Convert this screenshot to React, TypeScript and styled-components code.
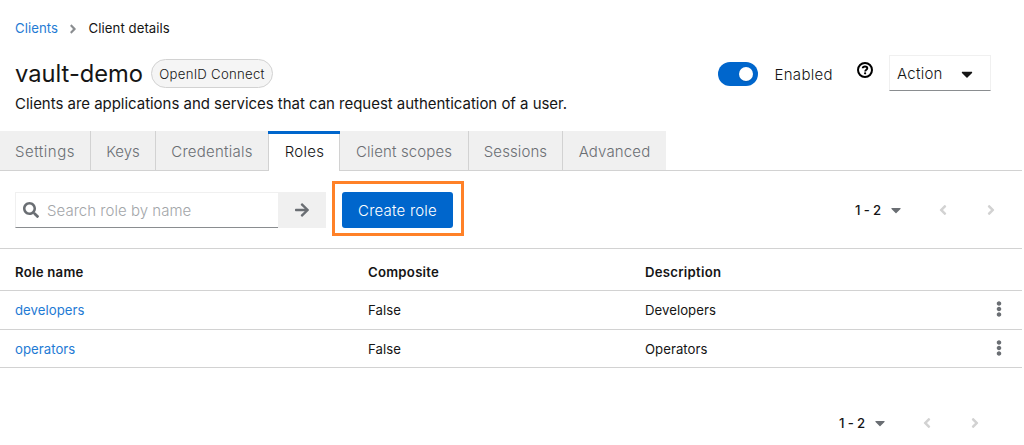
import React from "react";
import styled, { createGlobalStyle, css } from "styled-components";
import {
  FaAngleLeft,
  FaAngleRight,
  FaArrowRight,
  FaCaretDown,
  FaEllipsisV,
  FaSearch,
} from "react-icons/fa";

const GlobalStyle = createGlobalStyle`
  *, *::before, *::after { box-sizing: border-box; }
  body {
    margin: 0;
    background: #fff;
    color: #151515;
    font-family: Inter, "Liberation Sans", sans-serif;
    font-size: 15px;
    font-weight: 300;
    line-height: 24px;
  }
  svg { display: block; flex: none; }
  button, input { font: inherit; color: inherit; letter-spacing: inherit; }
`;

const Page = styled.main`
  width: 1022px;
  height: 445px;
  overflow: hidden;
`;

const Breadcrumb = styled.nav`
  display: flex;
  align-items: center;
  height: 21px;
  margin: 18px 0 0 15px;
  font-size: 13.2px;
  font-weight: 400;
  line-height: 21px;
  letter-spacing: 0.06px;

  svg {
    margin: 0 9px 0 7.5px;
    color: #8a8d90;
  }
`;

const Link = styled.a`
  color: #1f7bd4;
  text-decoration: none;
`;

const Header = styled.header`
  display: flex;
  align-items: flex-start;
  justify-content: space-between;
  height: 92px;
  padding: 16px 31px 0 15px;
`;

const TitleRow = styled.div`
  display: flex;
  align-items: center;
  gap: 8px;
  height: 37px;
`;

const Title = styled.h1`
  width: 128px;
  margin: 0;
  font-size: 23.7px;
  font-weight: 400;
  line-height: 32px;
  white-space: nowrap;
`;

const Badge = styled.span`
  display: flex;
  align-items: center;
  justify-content: center;
  width: 122px;
  height: 29px;
  border: 1px solid #d2d2d2;
  border-radius: 15px;
  background: #f5f5f5;
  font-size: 13.2px;
  letter-spacing: 0.25px;
  white-space: nowrap;
`;

const Subtitle = styled.p`
  margin: 0;
  font-weight: 400;
  letter-spacing: -0.03px;
  white-space: nowrap;
`;

const Controls = styled.div`
  display: flex;
  align-items: flex-start;
`;

const Toggle = styled.button`
  display: flex;
  align-items: center;
  justify-content: flex-end;
  width: 40px;
  height: 24px;
  margin: 7px 16.5px 0 0;
  padding: 0 5px;
  border: 0;
  border-radius: 12px;
  background: #06c;

  &::before {
    content: "";
    width: 14px;
    height: 14px;
    border-radius: 50%;
    background: #fff;
    box-shadow: 0 1px 2px rgba(3, 3, 3, 0.12);
  }
`;

const ToggleLabel = styled.span`
  width: 82.5px;
  margin-top: 8px;
  letter-spacing: 0.3px;
`;

const HelpSlot = styled.span`
  width: 32px;
  margin-top: 7px;
`;

const ActionButton = styled.button`
  display: flex;
  align-items: center;
  justify-content: space-between;
  width: 102px;
  height: 36px;
  padding: 1px 14px 0 7px;
  border: 1px solid #f0f0f0;
  border-bottom-color: #8a8d90;
  background: #fff;
  letter-spacing: 0.25px;
`;

const Tabs = styled.div`
  display: flex;
  height: 40px;

  &::after {
    content: "";
    flex: 1;
    border-bottom: 1px solid #d2d2d2;
  }
`;

const activeTab = css`
  padding: 2px 0 0 1px;
  border: 0;
  background:
    linear-gradient(#06c, #06c) top / 100% 3px no-repeat,
    linear-gradient(#d2d2d2, #d2d2d2) left / 1px 100% no-repeat,
    linear-gradient(#d2d2d2, #d2d2d2) right / 1px 100% no-repeat,
    #fff;
  color: #151515;
`;

const Tab = styled.button<{
  $width: number;
  $active?: boolean;
  $divider?: boolean;
  $tracking?: number;
}>`
  width: ${(p) => p.$width}px;
  padding: 2px 0 0;
  border: 0 solid #d2d2d2;
  border-right-width: ${(p) => (p.$divider ? 1 : 0)}px;
  border-bottom-width: 1px;
  background: #f0f0f0;
  color: #6a6e73;
  letter-spacing: ${(p) => p.$tracking ?? 0}px;
  white-space: nowrap;
  ${(p) => p.$active && activeTab}
`;

const Toolbar = styled.div`
  display: flex;
  align-items: center;
  height: 77px;
  padding: 0 23px 0 15px;
`;

const SearchField = styled.label`
  display: flex;
  align-items: center;
  gap: 8px;
  width: 263px;
  height: 36px;
  padding-left: 7px;
  border: 1px solid #f0f0f0;
  border-right: 0;
  border-bottom-color: #8a8d90;
  color: #6a6e73;
`;

const SearchInput = styled.input`
  width: 220px;
  padding: 2px 0 0;
  border: 0;
  outline: 0;
  background: transparent;
  letter-spacing: 0.03px;

  &::placeholder {
    color: #a3a6a9;
    opacity: 1;
  }
`;

const SearchButton = styled.button`
  display: flex;
  align-items: center;
  justify-content: center;
  width: 48px;
  height: 36px;
  padding: 0;
  border: 0;
  background: #f0f0f0;
  color: #6a6e73;
`;

const Highlight = styled.div`
  display: flex;
  align-items: center;
  width: 132px;
  height: 55px;
  margin: -2px auto 0 6px;
  padding: 2px 0 0 7px;
  border: 3px solid #ff8127;
`;

const PrimaryButton = styled.button`
  width: 111px;
  height: 36px;
  padding: 2px 0 0;
  border: 0;
  border-radius: 3px;
  background: #06c;
  color: #fff;
  letter-spacing: 0.2px;
`;

const PagerBox = styled.div`
  display: flex;
  align-items: center;
  height: 20px;
  color: #d2d2d2;
`;

const PagerRange = styled.span`
  width: 33px;
  color: #151515;
  font-size: 13.2px;
  font-weight: 500;
  letter-spacing: -0.15px;
`;

const PagerCaret = styled.span`
  width: 47px;
  color: #6a6e73;
`;

const PagerPrev = styled.span`
  width: 48px;
`;

const Footer = styled.footer`
  display: flex;
  justify-content: flex-end;
  padding: 45px 39px 0 0;
`;

const Table = styled.div`
  border-top: 1px solid #d2d2d2;
`;

const Row = styled.div<{ $height: number; $head?: boolean }>`
  display: grid;
  grid-template-columns: 353px 277px 346px 16px;
  align-items: center;
  height: ${(p) => p.$height}px;
  padding-left: 15px;
  border-bottom: 1px solid #d2d2d2;
  font-size: 13.2px;
  font-weight: ${(p) => (p.$head ? 600 : 400)};
  letter-spacing: ${(p) => (p.$head ? 0.25 : 0.03)}px;
  padding-top: ${(p) => (p.$head ? 5 : 0)}px;
`;

const Kebab = styled.span`
  color: #6a6e73;
  margin-top: -2px;
`;

function HelpIcon() {
  return (
    <svg width="16" height="16" viewBox="0 0 16 16" fill="none" stroke="#000">
      <circle cx="8" cy="8" r="7" strokeWidth="2" />
      <path d="M5.7 6.3C5.8 5 6.7 4.5 8 4.5c1.4 0 2.3.7 2.3 1.8C10.3 7.8 8.2 7.7 8.2 9.4" strokeWidth="1.9" />
      <circle cx="8.1" cy="11.3" r="1.15" fill="#000" stroke="none" />
    </svg>
  );
}

function Pager() {
  return (
    <PagerBox>
      <PagerRange>1 - 2</PagerRange>
      <PagerCaret>
        <FaCaretDown size={16} />
      </PagerCaret>
      <PagerPrev>
        <FaAngleLeft size={16} />
      </PagerPrev>
      <FaAngleRight size={16} />
    </PagerBox>
  );
}

const tabs = [
  { label: "Settings", width: 91, tracking: 0.5, divider: true },
  { label: "Keys", width: 65, tracking: -0.05, divider: true },
  { label: "Credentials", width: 112, tracking: 0.25 },
  { label: "Roles", width: 72, tracking: 0.25, active: true },
  { label: "Client scopes", width: 129, tracking: 0.12, divider: true },
  { label: "Sessions", width: 94, tracking: 0.1, divider: true },
  { label: "Advanced", width: 103, tracking: 0.15 },
];

const roles = [
  { name: "developers", description: "Developers", height: 39 },
  { name: "operators", description: "Operators", height: 38 },
];

export default function App() {
  return (
    <>
      <GlobalStyle />
      <Page>
        <Breadcrumb>
          <Link>Clients</Link>
          <FaAngleRight size={14} />
          <span>Client details</span>
        </Breadcrumb>

        <Header>
          <div>
            <TitleRow>
              <Title>vault-demo</Title>
              <Badge>OpenID Connect</Badge>
            </TitleRow>
            <Subtitle>
              Clients are applications and services that can request authentication of a user.
            </Subtitle>
          </div>
          <Controls>
            <Toggle aria-label="Enabled" />
            <ToggleLabel>Enabled</ToggleLabel>
            <HelpSlot>
              <HelpIcon />
            </HelpSlot>
            <ActionButton>
              Action
              <FaCaretDown size={18} />
            </ActionButton>
          </Controls>
        </Header>

        <Tabs>
          {tabs.map((t) => (
            <Tab
              key={t.label}
              $width={t.width}
              $active={t.active}
              $divider={t.divider}
              $tracking={t.tracking}
            >
              {t.label}
            </Tab>
          ))}
        </Tabs>

        <Toolbar>
          <SearchField>
            <FaSearch size={16} />
            <SearchInput placeholder="Search role by name" />
          </SearchField>
          <SearchButton aria-label="Search">
            <FaArrowRight size={16} />
          </SearchButton>
          <Highlight>
            <PrimaryButton>Create role</PrimaryButton>
          </Highlight>
          <Pager />
        </Toolbar>

        <Table>
          <Row $height={42} $head>
            <span>Role name</span>
            <span>Composite</span>
            <span>Description</span>
          </Row>
          {roles.map((r) => (
            <Row key={r.name} $height={r.height}>
              <Link>{r.name}</Link>
              <span>False</span>
              <span>{r.description}</span>
              <Kebab>
                <FaEllipsisV size={16} />
              </Kebab>
            </Row>
          ))}
        </Table>

        <Footer>
          <Pager />
        </Footer>
      </Page>
    </>
  );
}
